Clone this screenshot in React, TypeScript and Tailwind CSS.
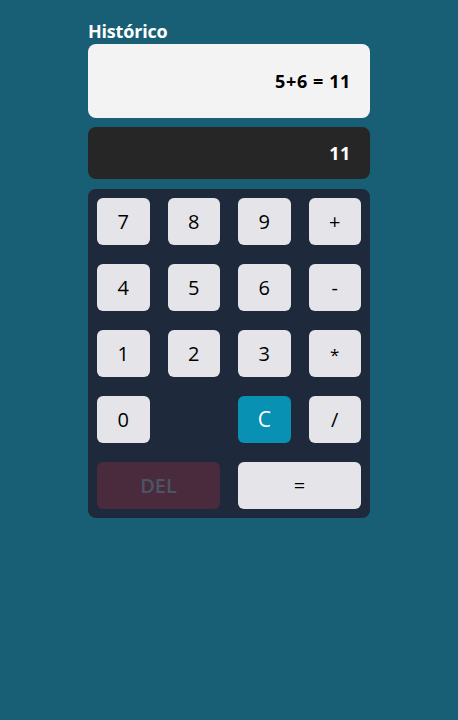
const keys = [
  ["7", "8", "9", "+"],
  ["4", "5", "6", "-"],
  ["1", "2", "3", "*"],
];

const Key = ({ label }: { label: string }) => (
  <button className="h-[47px] rounded-md bg-[#e5e5e9] text-[20px] text-black">
    {label === "*" ? <span className="text-[17px]">*</span> : label}
  </button>
);

export default function App() {
  return (
    <div
      className="min-h-screen bg-[#185e74] flex justify-center"
      style={{ fontFamily: '"Open Sans", "Noto Sans", sans-serif' }}
    >
      <div className="w-[282px] pt-[19px] flex flex-col">
        <h2 className="text-[18px] font-bold text-white leading-[25px] tracking-[-0.2px]">Histórico</h2>
        <div className="h-[74px] rounded-lg bg-[#f3f3f4] flex items-center justify-end pr-[19px]">
          <span className="text-[18px] font-bold text-black tracking-[0.6px] whitespace-pre">5+6 = 11</span>
        </div>
        <div className="mt-[9px] h-[52px] rounded-lg bg-[#262626] flex items-center justify-end pr-[19px]">
          <span className="text-[18px] font-bold text-white tracking-[0.6px]">11</span>
        </div>
        <div className="mt-[10px] rounded-lg bg-[#1e293b] p-[9px] grid grid-cols-4 gap-x-[18px] gap-y-[19px]">
          {keys.flat().map((k) => (
            <Key key={k} label={k} />
          ))}
          <Key label="0" />
          <div />
          <button className="h-[47px] rounded-md bg-[#0891b2] text-[21px] font-medium text-white">C</button>
          <Key label="/" />
          <button className="col-span-2 h-[47px] rounded-md bg-[#4a2a3d] text-[20px] font-semibold text-[#4b5563]">
            DEL
          </button>
          <button className="col-span-2 h-[47px] rounded-md bg-[#e5e5e9] text-[20px] text-black">=</button>
        </div>
      </div>
    </div>
  );
}
